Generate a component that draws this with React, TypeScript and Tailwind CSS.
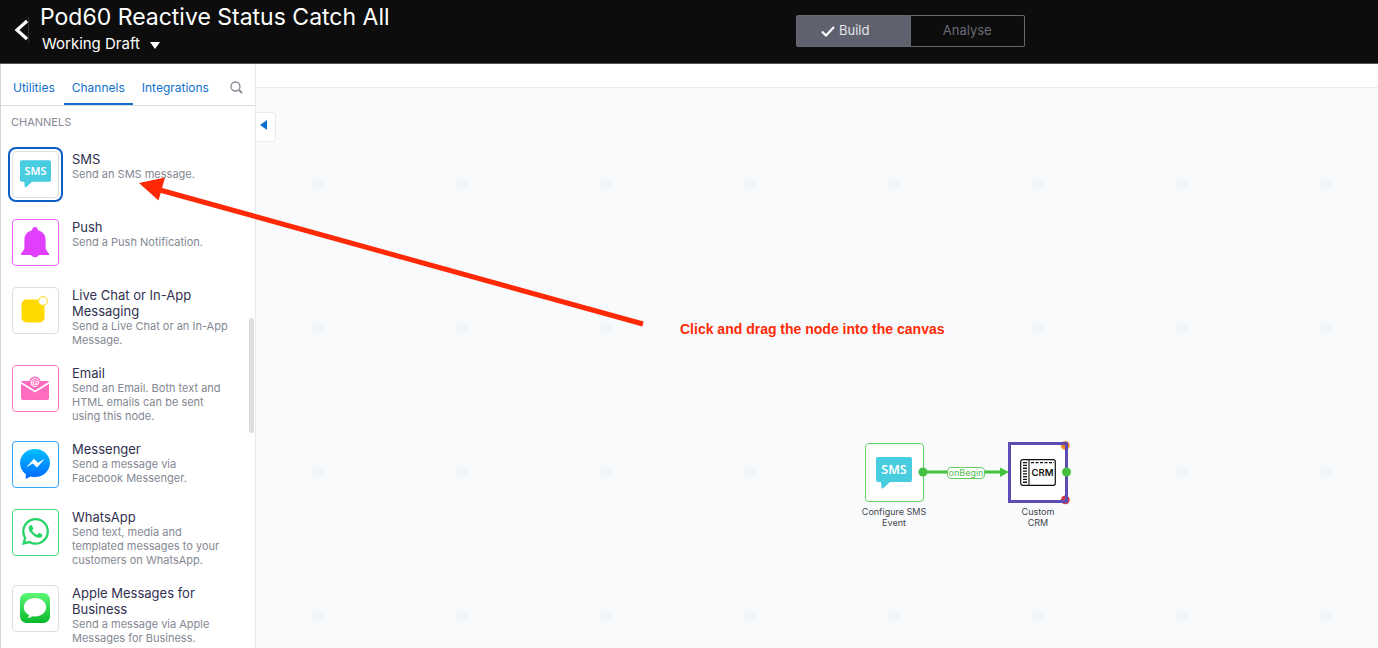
import type { ReactNode } from "react";

function SmsIcon({ className }: { className: string }) {
  return (
    <svg viewBox="0 0 36 32" className={className} aria-hidden="true">
      <path d="M2 0h32a2 2 0 0 1 2 2v21a2 2 0 0 1-2 2H14L7.200 31.300Q5.500 32 5.400 30.500L5 25H2a2 2 0 0 1-2-2V2a2 2 0 0 1 2-2z" fill="#47cce0" />
      <text x="18" y="17" textAnchor="middle" fill="#fff" fontSize="12.500" fontWeight="600" fontFamily="'Noto Sans', 'Open Sans', sans-serif">SMS</text>
    </svg>
  );
}

function BellIcon() {
  return (
    <svg viewBox="0 0 30 32" className="h-8 w-[30px]" aria-hidden="true">
      <path d="M15 1c1.900 0 2.900 1.300 2.900 3.200C23 5.500 25.600 9 25.600 14v7.500c0 2 1.200 3.500 3.400 6v1.500H1v-1.500c2.200-2.500 3.400-4 3.400-6V14c0-5 2.600-8.500 7.700-9.800C12.100 2.300 13.100 1 15 1z" fill="#e040fb" />
      <path d="M11 28.500c.8 3.500 7.200 3.500 8 0z" fill="#e040fb" />
    </svg>
  );
}

function ChatIcon() {
  return (
    <svg viewBox="0 0 28 28" className="size-7" aria-hidden="true">
      <rect x=".5" y="3.500" width="23" height="23" rx="5" fill="#ffd900" />
      <circle cx="22" cy="5" r="4.400" fill="#fff" stroke="#ffe14a" strokeWidth="1.200" />
    </svg>
  );
}

function EmailIcon() {
  return (
    <svg viewBox="0 0 30 26" className="h-[26px] w-[30px]" aria-hidden="true">
      <path d="M2 6h26a1 1 0 0 1 1 1v16a2 2 0 0 1-2 2H3a2 2 0 0 1-2-2V7a1 1 0 0 1 1-1z" fill="#ff6bbd" />
      <path d="M.5 7.500L15 16.500 29.500 7.500" fill="none" stroke="#fff" strokeWidth="1.500" />
      <circle cx="15" cy="7" r="5.600" fill="#ff6bbd" />
      <text x="15" y="9.800" textAnchor="middle" fill="#fff" fontSize="9" fontWeight="600" fontFamily="Inter, sans-serif">@</text>
    </svg>
  );
}

function MessengerIcon() {
  return (
    <svg viewBox="0 0 30 32" className="h-8 w-[30px]" aria-hidden="true">
      <defs>
        <linearGradient id="messenger-fill" x1="0" y1="0" x2="0" y2="1">
          <stop offset="0" stopColor="#00c0ff" />
          <stop offset="1" stopColor="#0068ff" />
        </linearGradient>
      </defs>
      <path d="M15 1c8.300 0 15 6.200 15 14s-6.700 14-15 14c-1.600 0-3.100-.2-4.500-.6L5.800 31V26.200C2.200 23.600 0 19.600 0 15 0 7.200 6.700 1 15 1z" fill="url(#messenger-fill)" />
      <path d="M6 19.500l8-8.700 4 4 6.800-4-7.800 8.700-4.200-4z" fill="#fff" />
    </svg>
  );
}

function WhatsAppIcon() {
  return (
    <svg viewBox="0 0 24 24" className="size-[27px]" aria-hidden="true">
      <path
        fill="#25d366"
        d="M17.472 14.382c-.297-.149-1.758-.867-2.030-.967-.273-.099-.471-.148-.67.150-.197.297-.767.966-.940 1.164-.173.199-.347.223-.644.075-.297-.150-1.255-.463-2.390-1.475-.883-.788-1.480-1.761-1.653-2.059-.173-.297-.018-.458.130-.606.134-.133.298-.347.446-.520.149-.174.198-.298.298-.497.099-.198.050-.371-.025-.520-.075-.149-.669-1.612-.916-2.207-.242-.579-.487-.500-.669-.510-.173-.008-.371-.010-.570-.010-.198 0-.520.074-.792.372-.272.297-1.040 1.016-1.040 2.479 0 1.462 1.065 2.875 1.213 3.074.149.198 2.096 3.200 5.077 4.487.709.306 1.262.489 1.694.625.712.227 1.360.195 1.871.118.571-.085 1.758-.719 2.006-1.413.248-.694.248-1.289.173-1.413-.074-.124-.272-.198-.570-.347m-5.421 7.403h-.004a9.870 9.870 0 0 1-5.031-1.378l-.361-.214-3.741.982.998-3.648-.235-.374a9.860 9.860 0 0 1-1.510-5.260c.001-5.450 4.436-9.884 9.888-9.884 2.640 0 5.122 1.030 6.988 2.898a9.825 9.825 0 0 1 2.893 6.994c-.003 5.450-4.437 9.884-9.885 9.884m8.413-18.297A11.815 11.815 0 0 0 12.050 0C5.495 0 .160 5.335.157 11.892c0 2.096.547 4.142 1.588 5.945L.057 24l6.305-1.654a11.882 11.882 0 0 0 5.683 1.448h.005c6.554 0 11.890-5.335 11.893-11.893a11.821 11.821 0 0 0-3.480-8.413z"
      />
    </svg>
  );
}

function AppleMessagesIcon() {
  return (
    <svg viewBox="0 0 30 30" className="size-[30px]" aria-hidden="true">
      <defs>
        <linearGradient id="messages-fill" x1="0" y1="0" x2="0" y2="1">
          <stop offset="0" stopColor="#5df777" />
          <stop offset="1" stopColor="#09b82a" />
        </linearGradient>
      </defs>
      <rect width="30" height="30" rx="6.500" fill="url(#messages-fill)" />
      <path d="M15 5c6.200 0 11.200 4.200 11.200 9.300S21.200 23.600 15 23.600c-1.100 0-2.100-.1-3-.4-1 .9-2.500 1.600-4.400 1.700.9-.9 1.400-1.900 1.400-3C5.800 20.300 3.800 17.500 3.800 14.300 3.800 9.200 8.800 5 15 5z" fill="#fff" />
    </svg>
  );
}

function CrmIcon() {
  return (
    <svg viewBox="0 0 36 27" className="h-[27px] w-9" aria-hidden="true">
      <rect x=".7" y=".7" width="34.600" height="25.600" rx="2" fill="#fff" stroke="#111" strokeWidth="1.200" />
      <path d="M9 1v25" stroke="#111" strokeWidth="1.100" />
      <path d="M5 3v21.500" stroke="#111" strokeWidth="4" strokeDasharray="1.300 1.500" />
      <path d="M11 3.700h23" stroke="#111" strokeWidth="1.200" strokeDasharray="3 1.500" />
      <text x="22.500" y="17" textAnchor="middle" fill="#111" fontSize="9.500" fontWeight="600" fontFamily="Inter, sans-serif">CRM</text>
    </svg>
  );
}

type Channel = { name: string; description: string; frame: string; icon: ReactNode };

const channels: Channel[] = [
  { name: "SMS", description: "Send an SMS message.", frame: "border-[#dedfe2] outline-2 outline-offset-2 outline-[#0b5fc4]", icon: <SmsIcon className="h-7 w-[31px]" /> },
  { name: "Push", description: "Send a Push Notification.", frame: "border-[#e767fa]", icon: <BellIcon /> },
  { name: "Live Chat or In-App Messaging", description: "Send a Live Chat or an In-App\nMessage.", frame: "border-[#dedfe2]", icon: <ChatIcon /> },
  { name: "Email", description: "Send an Email. Both text and\nHTML emails can be sent\nusing this node.", frame: "border-[#ff7cc5]", icon: <EmailIcon /> },
  { name: "Messenger", description: "Send a message via\nFacebook Messenger.", frame: "border-[#37a5fa]", icon: <MessengerIcon /> },
  { name: "WhatsApp", description: "Send text, media and\ntemplated messages to your\ncustomers on WhatsApp.", frame: "border-[#45d97b]", icon: <WhatsAppIcon /> },
  { name: "Apple Messages for Business", description: "Send a message via Apple\nMessages for Business.", frame: "border-[#dedfe2]", icon: <AppleMessagesIcon /> },
];

function Header() {
  return (
    <header className="flex h-16 shrink-0 items-start border-b border-[#55565a] bg-[#0d0d0d] text-white">
      <div className="flex flex-1 items-start">
        <button aria-label="Back" className="mt-4 ml-3 flex h-7 w-[17px] items-center">
          <svg viewBox="0 0 17 26" className="h-[26px] w-[17px]" aria-hidden="true">
            <path d="M15 4L5 13l10 9" fill="none" stroke="#fff" strokeWidth="3.200" />
            <path d="M16.500 0v26" stroke="#30303a" />
          </svg>
        </button>
        <div className="ml-[11px]">
          <h1 className="h-[34px] text-[23px] leading-[34px] whitespace-nowrap">Pod60 Reactive Status Catch All</h1>
          <button className="flex items-center gap-[10px] pl-0.5 text-[15px] leading-5">
            Working Draft
            <svg viewBox="0 0 10 7" className="mt-0.5 h-[7px] w-[10px]" aria-hidden="true">
              <path d="M0 0h10L5 7z" fill="#fff" />
            </svg>
          </button>
        </div>
      </div>
      <div className="mt-[15px] flex h-8 w-[229px] shrink-0 text-[13px]">
        <button className="flex w-1/2 items-center justify-center gap-1 rounded-l-xs border border-[#666874] bg-[#5f616f] pr-4 text-[#e4e4e8]">
          <svg viewBox="0 0 14 11" className="h-[11px] w-[14px]" aria-hidden="true">
            <path d="M1 5.500l4 4L13 1" fill="none" stroke="#fff" strokeWidth="2.200" />
          </svg>
          Build
        </button>
        <button className="w-1/2 rounded-r-xs border border-l-0 border-[#666874] text-[#696a73]">Analyse</button>
      </div>
      <div className="w-[353px] shrink" />
    </header>
  );
}

function Sidebar() {
  return (
    <aside className="relative flex w-64 shrink-0 flex-col overflow-hidden border-x border-l-[#d4d4d8] border-r-[#e9eaed] bg-white">
      <nav className="flex h-[42px] shrink-0 items-stretch gap-[9px] border-b border-[#dddee1] pl-3 text-xs text-[#1070ce]">
        <a href="#utilities" className="flex items-center pt-1.5">Utilities</a>
        <a href="#channels" aria-current="page" className="flex items-center border-b-2 border-[#1070ce] px-2 pt-2">Channels</a>
        <a href="#integrations" className="flex items-center pt-1.5">Integrations</a>
        <button aria-label="Search nodes" className="ml-auto flex items-center pt-1.5 pr-3">
          <svg viewBox="0 0 13 13" className="size-[13px]" fill="none" stroke="#858793" aria-hidden="true">
            <circle cx="5.500" cy="5.500" r="4.500" strokeWidth="1.300" />
            <path d="M9 9l3 3" strokeWidth="1.800" />
          </svg>
        </button>
      </nav>
      <h2 className="mt-2 pl-[10px] text-[11px] leading-4 text-[#878996]">CHANNELS</h2>
      <ul className="mt-[21px] flex flex-col gap-[18px] pl-[11px]">
        {channels.map((c) => (
          <li key={c.name} className="flex min-h-[50px] items-start gap-[13px]">
            <div className={`flex size-[47px] shrink-0 items-center justify-center rounded border bg-white pr-px pb-0.5 ${c.frame}`}>{c.icon}</div>
            <div className="w-[168px]">
              <h3 className="text-[13px] leading-4 text-[#303150]">{c.name}</h3>
              <p className="text-[11px] leading-[14px] whitespace-pre text-[#858892]">{c.description}</p>
            </div>
          </li>
        ))}
      </ul>
      <div className="absolute top-[254px] right-px h-[115px] w-[5px] rounded-full bg-[#dcdddf]" />
    </aside>
  );
}

function Canvas() {
  return (
    <main className="flex min-w-0 flex-1 flex-col">
      <div className="h-6 shrink-0 border-b border-[#e9ebee] bg-white" />
      <div className="relative flex-1 overflow-hidden bg-[#f9fafc] bg-[radial-gradient(circle,#f1f5fc_5px,transparent_7px)] bg-size-[144px_144px] bg-position-[-10px_24px]">
        <button aria-label="Collapse panel" className="absolute top-6 left-0 flex h-[30px] w-5 items-start justify-start rounded-r border border-l-0 border-[#e8eaed] bg-white pt-[7px] pl-1">
          <svg viewBox="0 0 7 10" className="h-[10px] w-[7px]" aria-hidden="true">
            <path d="M7 0v10L0 5z" fill="#1070ce" />
          </svg>
        </button>

        <div className="absolute top-[355px] left-[598px] flex w-20 flex-col items-center">
          <div className="flex size-[59px] items-center justify-center rounded border border-[#65d562] bg-white">
            <SmsIcon className="h-8 w-9" />
          </div>
          <p className="mt-1 text-center text-[9px] leading-[11px] text-[#45464c]">Configure SMS<br />Event</p>
        </div>

        <div className="absolute top-[354px] left-[742px] flex w-20 flex-col items-center">
          <div className="flex h-[61px] w-[60px] items-center justify-center border-3 border-[#5c4cb3] bg-white">
            <CrmIcon />
          </div>
          <p className="mt-[3px] text-center text-[9px] leading-[11px] text-[#45464c]">Custom<br />CRM</p>
        </div>

        <svg viewBox="0 0 160 68" className="absolute top-[352px] left-[660px] h-[68px] w-40" aria-hidden="true">
          <path d="M7 32h78" stroke="#44c13f" strokeWidth="3" />
          <path d="M84 27.500L93 32l-9 5z" fill="#44c13f" />
          <circle cx="7" cy="32" r="4.500" fill="#44c13f" />
          <circle cx="149.300" cy="5.500" r="4.400" fill="#f18a1c" />
          <circle cx="149.300" cy="59.800" r="4.400" fill="#d6363c" />
          <path d="M143 3.500h7.500v58H143" fill="none" stroke="#5c4cb3" strokeWidth="3" />
          <circle cx="150.500" cy="32" r="4.500" fill="#44c13f" />
        </svg>
        <span className="absolute top-[379px] left-[691px] flex h-3 w-[38px] items-center justify-center rounded border border-[#65cc62] bg-white text-[9px] text-[#58bd54]">onBegin</span>

        <p className="absolute top-[231px] left-[424px] font-['Liberation_Sans',Arial,sans-serif] text-[14px] leading-5 font-bold whitespace-nowrap text-[#ff2a05]">Click and drag the node into the canvas</p>
      </div>
    </main>
  );
}

export default function App() {
  return (
    <div className="relative flex h-screen flex-col overflow-hidden bg-white font-[Inter,'Liberation_Sans',sans-serif]">
      <Header />
      <div className="flex min-h-0 flex-1">
        <Sidebar />
        <Canvas />
      </div>
      <svg viewBox="0 0 510 150" className="pointer-events-none absolute top-[178px] left-[136px] h-[150px] w-[510px]" aria-hidden="true">
        <path d="M507 146L22 11.500" stroke="#ff2a05" strokeWidth="5" />
        <path d="M3 5l26-5.500-6.500 23z" fill="#ff2a05" />
      </svg>
    </div>
  );
}
